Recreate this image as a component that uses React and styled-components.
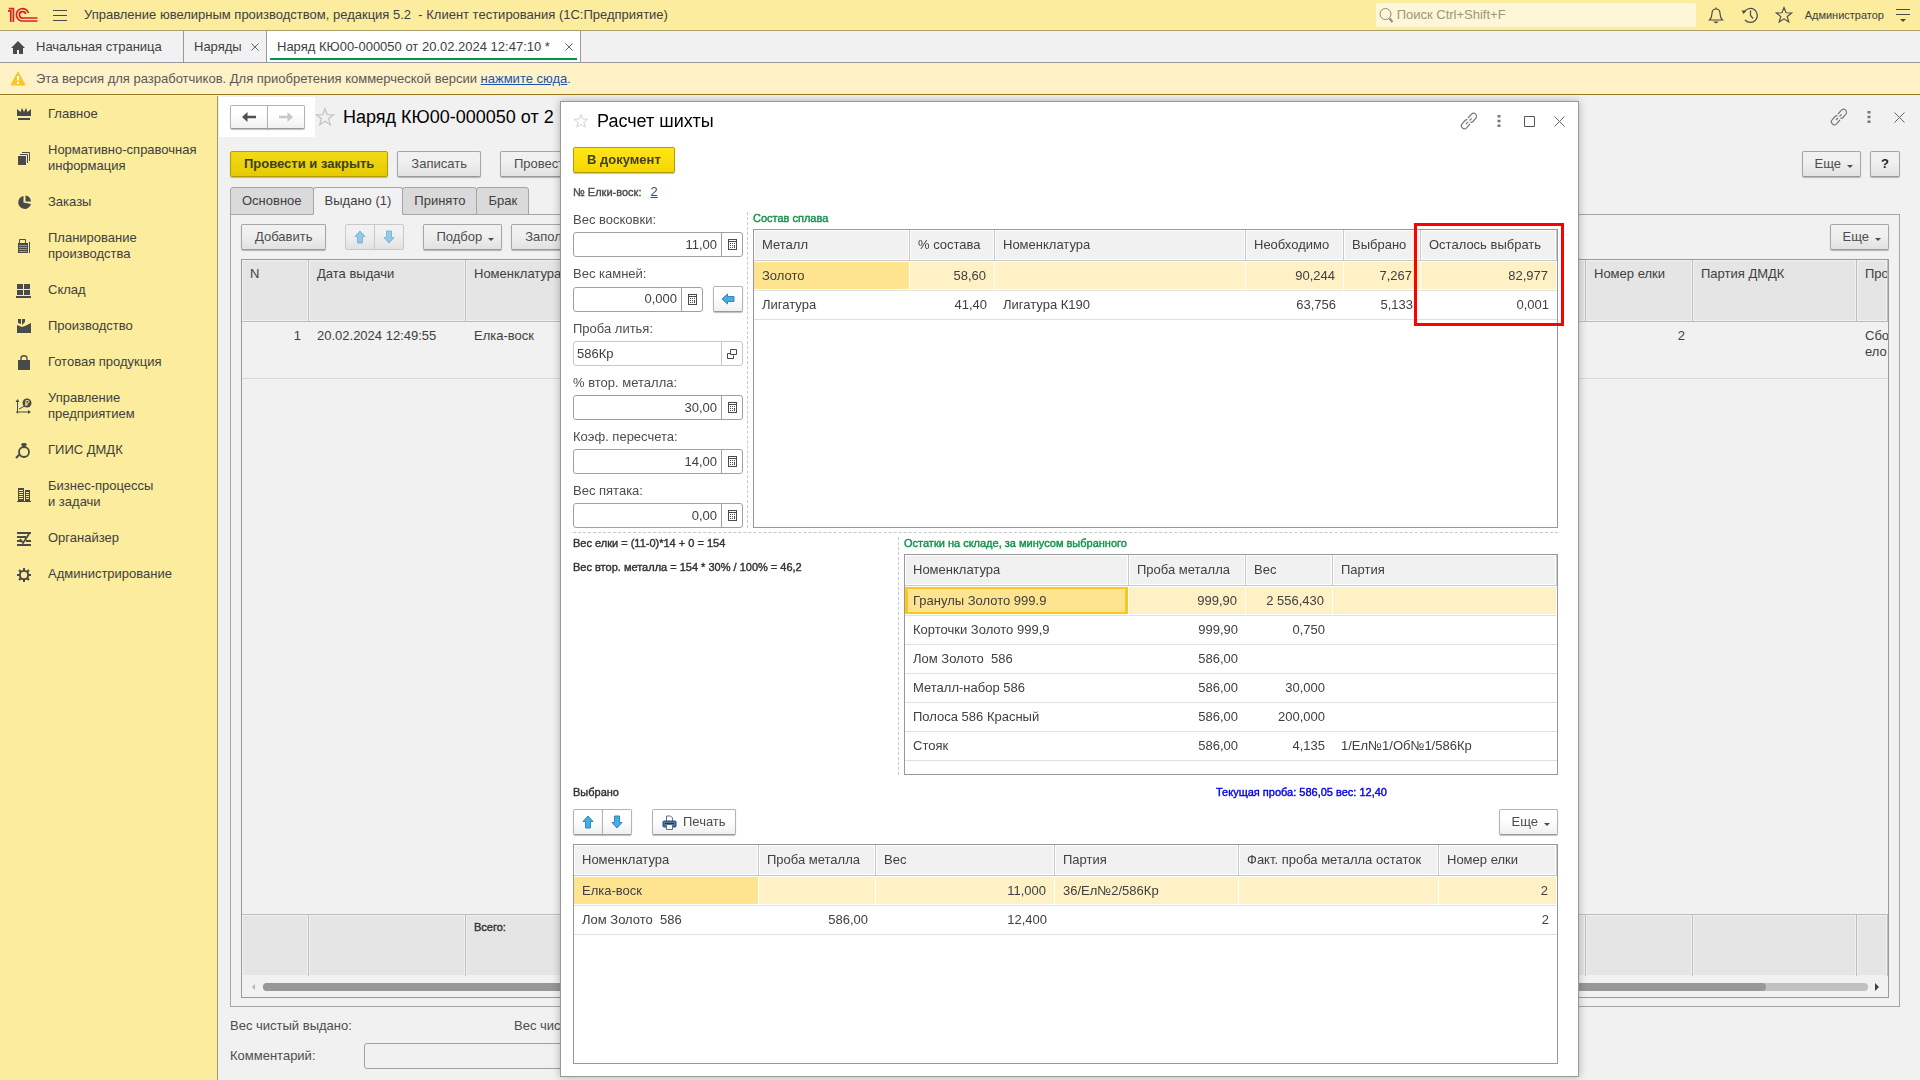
import React from "react";
import styled, { createGlobalStyle, css } from "styled-components";

const Global = createGlobalStyle`
  *, *::before, *::after { box-sizing: border-box; }
  body { margin: 0; background: #f1f1f1; overflow: hidden; }
  body, button, input, table { font: 13px/16px "Liberation Sans", Arial, sans-serif; color: #404040; }
  button { cursor: pointer; }
`;

/* ---------- shell ---------- */

const Page = styled.div`
  height: 100vh;
  display: flex;
  flex-direction: column;
`;

const TitleBar = styled.header`
  height: 31px;
  flex: none;
  display: flex;
  align-items: center;
  padding: 0 9px 0 8px;
  background: #fbec9e;
  border-bottom: 1px solid #aaa06c;
`;

const AppTitle = styled.h1`
  margin: 0 auto 0 16px;
  font: inherit;
  white-space: pre;
`;

const SearchBox = styled.label`
  display: flex;
  align-items: center;
  gap: 3px;
  width: 320px;
  height: 24px;
  padding: 0 3px;
  margin-right: 12px;
  border-radius: 2px;
  background: #fdf6d7;
  input {
    flex: 1;
    min-width: 0;
    padding: 0;
    border: 0;
    outline: 0;
    background: none;
  }
  input::placeholder { color: #9b9681; opacity: 1; }
`;

const PlainButton = styled.button`
  display: inline-flex;
  align-items: center;
  justify-content: center;
  width: ${(p) => p.$w || 16}px;
  height: ${(p) => p.$h || 24}px;
  padding: 0;
  border: 0;
  background: none;
  svg { flex: none; }
`;

const TopActions = styled.div`
  display: flex;
  align-items: center;
  gap: 7px;
`;

const UserName = styled.span`
  margin: 0 4px 0 6px;
  font-size: 11px;
`;

const TabStrip = styled.nav`
  display: flex;
  flex: none;
  height: 32px;
  border-bottom: 1px solid #999;
  background: #f1f1f1;
`;

const WindowTab = styled.div`
  position: relative;
  display: flex;
  align-items: center;
  justify-content: space-between;
  width: ${(p) => p.$w}px;
  padding: 0 6px 0 10px;
  border-right: 1px solid #999;
  white-space: nowrap;
  a { color: inherit; text-decoration: none; }
  ${(p) => p.$home && css`justify-content: flex-start; gap: 10px;`}
  ${(p) => p.$active && css`
    background: #fff;
    &::after {
      content: "";
      position: absolute;
      left: 3px;
      right: 3px;
      bottom: 2px;
      height: 2px;
      background: #009646;
    }
  `}
`;

const Notice = styled.div`
  display: flex;
  flex: none;
  align-items: center;
  gap: 10px;
  height: 32px;
  padding-left: 10px;
  color: #595959;
  background: #fef2c6;
  border-bottom: 1px solid #957a1c;
  a { color: #1a53b0; }
`;

const Body = styled.div`
  display: flex;
  flex: 1;
  min-height: 0;
  padding-top: 1px;
`;

const Sidebar = styled.nav`
  flex: none;
  width: 218px;
  background: #fbec9e;
  border-right: 1px solid #a0976b;
`;

const SideLink = styled.a`
  display: flex;
  align-items: center;
  gap: 14px;
  padding: 10px 0 10px 14px;
  color: #404040;
  text-decoration: none;
  white-space: pre;
  svg { flex: none; margin: -2px 0; }
`;

/* ---------- common controls ---------- */

const Button = styled.button`
  display: inline-flex;
  align-items: center;
  justify-content: center;
  gap: ${(p) => p.$gap || 4}px;
  height: 26px;
  padding: 0 ${(p) => p.$pad || 13}px;
  color: #4d4d4d;
  white-space: nowrap;
  border: 1px solid ${(p) => (p.$dim ? "#a6a6a6" : "#b3b3b3")};
  border-bottom-color: #999;
  border-radius: 2px;
  background: linear-gradient(${(p) => (p.$dim ? "#f1f1f1, #f0f0f0 40%, #e2e2e2" : "#fff, #fff 40%, #f0f0f0")});
  box-shadow: 0 1px 1px rgba(0, 0, 0, 0.25);
  ${(p) => p.$primary && css`
    font-weight: bold;
    color: #404022;
    border-color: #b39e00;
    background: ${p.$dim ? "linear-gradient(#f1da18, #e5cb00)" : "linear-gradient(#ffe61a, #f5d600)"};
  `}
`;

const MenuButton = styled(Button)`
  gap: 6px;
  padding: 0 7px 0 12px;
`;

const Caret = styled.span`
  margin-top: 4px;
  border: 3px solid transparent;
  border-top-color: #4d4d4d;
  border-bottom: 0;
`;

const Segmented = styled.div`
  display: flex;
  ${Button} {
    width: ${(p) => p.$w || 30}px;
    padding: 0;
    height: ${(p) => p.$h || 26}px;
  }
  ${Button}:first-child { border-radius: 2px 0 0 2px; }
  ${Button}:last-child { margin-left: -1px; border-radius: 0 2px 2px 0; }
  ${(p) => p.$faded && css`
    ${Button} { border-color: #c9c9c9; box-shadow: none; }
    svg { opacity: 0.55; }
  `}
`;

const Toolbar = styled.div`
  display: flex;
  align-items: center;
  flex: none;
  gap: ${(p) => p.$gap || 9}px;
  margin-top: ${(p) => p.$top || 0}px;
`;

const Push = styled.div`
  margin-left: auto;
`;

const Spaced = styled.div`
  display: flex;
  margin: 0 10px;
`;

/* ---------- document form ---------- */

const Main = styled.main`
  display: flex;
  flex: 1;
  flex-direction: column;
  min-width: 0;
`;

const FormHeader = styled.div`
  display: flex;
  align-items: center;
  flex: none;
  height: 42px;
  padding-right: 6px;
`;

const NavBox = styled.div`
  margin: 0 0 0 1px;
  padding: 8px 10px 8px 11px;
  background: #fff;
`;

const FormTitle = styled.h2`
  margin: 0 auto 0 8px;
  font: 18px/22px "Liberation Sans", Arial, sans-serif;
  color: #000;
  white-space: nowrap;
`;

const FormBody = styled.div`
  display: flex;
  flex: 1;
  flex-direction: column;
  min-height: 0;
  padding: 13px 20px 11px 12px;
`;

const PageTabs = styled.div`
  display: flex;
  flex: none;
  margin-top: 10px;
`;

const PageTab = styled.button`
  height: 28px;
  margin: 0 -1px -1px 0;
  padding: 0 11px;
  border: 1px solid #a6a6a6;
  border-radius: 3px 3px 0 0;
  background: #dadada;
  ${(p) => p.$active && css`
    position: relative;
    border-bottom-color: #f1f1f1;
    background: #f1f1f1;
  `}
`;

const Panel = styled.section`
  display: flex;
  flex: 1;
  flex-direction: column;
  min-height: 0;
  padding: 9px 10px 8px;
  border: 1px solid #a6a6a6;
`;

const DocGrid = styled.div`
  display: flex;
  flex: 1;
  flex-direction: column;
  min-height: 0;
  margin-top: 9px;
  border: 1px solid #999;
  overflow: hidden;
`;

const DocTable = styled.table`
  width: 100%;
  table-layout: fixed;
  border-collapse: separate;
  border-spacing: 0;
  th, td {
    padding: 6px 8px;
    text-align: left;
    vertical-align: top;
    font-weight: normal;
    overflow: hidden;
    white-space: pre;
  }
  th {
    height: 62px;
    background: #e5e5e5;
    border-right: 1px solid #bdbdbd;
    border-bottom: 1px solid #bdbdbd;
    box-shadow: inset 0 0 0 1px #f1f1f1;
  }
  td { height: 57px; border-bottom: 1px solid #d9d9d9; }
  td.num { text-align: right; }
`;

const FootTable = styled(DocTable)`
  margin-top: auto;
  td {
    height: 62px;
    background: #e5e5e5;
    border: 0 solid #bdbdbd;
    border-width: 1px 1px 0 0;
    box-shadow: inset 0 0 0 1px #f1f1f1;
  }
`;

const ScrollBar = styled.div`
  display: flex;
  align-items: center;
  flex: none;
  gap: 7px;
  height: 21px;
  padding: 0 8px 0 9px;
`;

const ScrollTrack = styled.div`
  flex: 1;
  height: 8px;
  padding-right: 102px;
  border-radius: 4px;
  background: #c1c1c1;
  &::before {
    content: "";
    display: block;
    height: 8px;
    border-radius: 4px;
    background: #979797;
  }
`;

const Totals = styled.div`
  display: grid;
  grid-template-columns: 284px 1fr;
  flex: none;
  margin: 11px 0 9px;
  color: #4d4d4d;
`;

const CommentRow = styled.label`
  display: grid;
  grid-template-columns: 134px minmax(0, 600px);
  align-items: center;
  flex: none;
  color: #4d4d4d;
  input {
    height: 26px;
    border: 1px solid #a0a0a0;
    border-radius: 3px;
    background: #f1f1f1;
  }
`;

/* ---------- dialog ---------- */

const Dialog = styled.section`
  position: fixed;
  inset: 101px 341px 3px 560px;
  display: flex;
  flex-direction: column;
  padding: 0 20px 12px 12px;
  border: 1px solid #999;
  background: #fff;
  box-shadow: 0 0 8px rgba(0, 0, 0, 0.28);
`;

const DialogHeader = styled.div`
  display: flex;
  align-items: center;
  flex: none;
  height: 38px;
  margin-right: -16px;
`;

const TreeRow = styled.div`
  display: flex;
  align-items: center;
  flex: none;
  gap: 9px;
  height: 37px;
  margin-bottom: 2px;
  a { color: #1a4fae; }
`;

const Small = styled.div`
  font-size: 11px;
  line-height: 12px;
  white-space: nowrap;
  -webkit-text-stroke: 0.4px currentColor;
  color: ${(p) => p.$color || "#333"};
`;

const Split = styled.div`
  display: grid;
  flex: none;
  grid-template-columns: ${(p) => p.$left}px minmax(0, 1fr);
  column-gap: 10px;
`;

const SplitLeft = styled.div`
  position: relative;
  display: flex;
  flex-direction: column;
  gap: ${(p) => p.$gap}px;
  &::after {
    content: "";
    position: absolute;
    top: 0;
    bottom: 0;
    right: -5px;
    border-right: 1px dashed #c8c8c8;
  }
`;

const SplitRight = styled.div`
  display: flex;
  flex-direction: column;
  gap: 5px;
`;

const Divider = styled.hr`
  flex: none;
  width: 100%;
  margin: 4px 0 4px;
  border: 0;
  border-top: 1px dashed #c8c8c8;
`;

const FieldBlock = styled.div`
  display: flex;
  flex-direction: column;
  gap: 4px;
  color: #4d4d4d;
`;

const FieldLine = styled.div`
  display: flex;
  align-items: center;
  gap: 10px;
`;

const FieldBox = styled.div`
  display: flex;
  flex: 1;
  min-width: 0;
  height: 25px;
  border: 1px solid ${(p) => (p.$soft ? "#c8c8c8" : "#a0a0a0")};
  border-radius: 3px;
  input {
    flex: 1;
    min-width: 0;
    padding: 0 4px 0 3px;
    border: 0;
    outline: 0;
    background: none;
    text-align: ${(p) => (p.$soft ? "left" : "right")};
  }
  button {
    width: 21px;
    height: 23px;
    border-left: 1px solid ${(p) => (p.$soft ? "#c8c8c8" : "#a0a0a0")};
  }
`;

const GridFrame = styled.div`
  position: relative;
  flex: 1;
  min-height: ${(p) => p.$min || 0}px;
  margin-top: ${(p) => p.$top || 0}px;
  border: 1px solid #999;
`;

const Grid = styled.table`
  width: 100%;
  table-layout: fixed;
  border-collapse: separate;
  border-spacing: 0;
  th, td {
    padding: 0 8px;
    text-align: left;
    font-weight: normal;
    white-space: pre;
  }
  th {
    height: 31px;
    background: #f1f1f1;
    border-right: 1px solid #c8c8c8;
    border-bottom: 1px solid #c8c8c8;
    box-shadow: inset 0 0 0 1px #fff;
  }
  td { height: 29px; border-bottom: 1px solid #e0e0e0; }
  tbody tr:first-child td {
    height: 30px;
    background: #fef1c5;
    border-right: 1px solid #fff;
    box-shadow: inset 0 1px #fff, inset 0 -1px #fff;
  }
  tbody tr:first-child td:first-child {
    background: #fee48f;
    ${(p) => p.$focus && css`box-shadow: inset 0 1px #fff, inset 0 -1px #fff, inset 0 0 0 3px #fac71e;`}
  }
  td.num { text-align: right; }
`;

const Highlight = styled.div`
  position: absolute;
  top: -7px;
  right: -7px;
  width: 150px;
  height: 103px;
  border: 3px solid #fe0000;
  pointer-events: none;
`;

const ChosenRow = styled.div`
  display: grid;
  grid-template-columns: 643px 1fr;
  align-items: center;
  flex: none;
  height: 34px;
`;

/* ---------- icons ---------- */

const INK = "#4a4a4a";

const Svg = ({ w = 20, h = w, children, ...rest }) => (
  <svg width={w} height={h} viewBox={`0 0 ${w} ${h}`} fill="none" aria-hidden="true" {...rest}>
    {children}
  </svg>
);

const Logo = () => (
  <Svg w={30} h={16}>
    <g stroke="#dd1f26" strokeWidth="1.700">
      <path d="M0 3.800h2.800V15M.8 1.700h4.600V15" />
      <path d="M20.500 6A6.200 6.200 0 1 0 15 14h14.500" />
      <path d="M17.700 7A3.200 3.200 0 1 0 15 11h14.500" />
    </g>
  </Svg>
);

const Menu = () => (
  <Svg w={14} h={12}><path d="M0 1.500h14M0 6.500h14M0 11.500h14" stroke={INK} /></Svg>
);

const Magnifier = () => (
  <Svg w={15} h={16} stroke="#8f8b78">
    <circle cx="6.500" cy="7" r="5.500" />
    <path d="M10.500 11.500L13.500 15" strokeWidth="2" />
  </Svg>
);

const Bell = () => (
  <Svg w={16} h={18} stroke={INK} strokeWidth="1.200">
    <path d="M8 1.500v1M1.500 14c2.500-2 2.300-4.500 2.500-7C4.200 4.500 6 3 8 3s3.800 1.500 4 4c.2 2.500 0 5 2.500 7z" />
    <path d="M5 15.500h6L8 17.500z" fill={INK} stroke="none" />
  </Svg>
);

const HistoryIcon = () => (
  <Svg w={18} h={18} stroke={INK} strokeWidth="1.200">
    <path d="M3 6.500A7 7 0 1 1 4 14" />
    <path d="M9.500 4.500v5l2.500 3" />
    <path d="M.5 4.500h5L2.500 8z" fill={INK} stroke="none" />
  </Svg>
);

const Star = ({ size = 18, color = INK }) => (
  <svg width={size} height={size} viewBox="0 0 18 18" fill="none" stroke={color} strokeWidth="1.100" aria-hidden="true">
    <path d="M9 1.500l2 5.300 5.700.2-4.500 3.500 1.600 5.500L9 12.800 4.200 16l1.600-5.500L1.300 7l5.700-.2z" />
  </svg>
);

const UserMenu = () => (
  <Svg w={14} h={14}><path d="M0 1.500h14M0 6.500h14" stroke={INK} /><path d="M4 11h6l-3 3z" fill={INK} /></Svg>
);

const Home = () => (
  <Svg w={16} h={14}><path d="M8 1L1 8h2v6h4V10h2v4h4V8h2z" fill={INK} /></Svg>
);

const Cross = ({ size = 8 }) => (
  <Svg w={size}><path d={`M.5 .5L${size - 0.5} ${size - 0.5}M${size - 0.5} .5L.5 ${size - 0.5}`} stroke="#666" /></Svg>
);

const Warning = () => (
  <Svg w={16} h={15}>
    <path d="M8 1l7 13H1z" fill="#f9c71d" stroke="#f9c71d" strokeLinejoin="round" />
    <path d="M8 5v4.500M8 11v2" stroke="#fff" strokeWidth="2" />
  </Svg>
);

const LinkIcon = () => (
  <Svg w={18} stroke="#777" strokeWidth="1.200">
    <path d="M6 12l6-6" strokeDasharray="3 2" />
    <path d="M8 6l3.500-3.800a2.900 2.900 0 0 1 4.200 4.100L13 9.500a3 3 0 0 1-2.500.8" />
    <path d="M10 12l-3.500 3.800a2.900 2.900 0 0 1-4.200-4.100L5 8.500a3 3 0 0 1 2.500-.8" />
  </Svg>
);

const Dots = () => (
  <Svg w={4} h={12}><path d="M.5 0h3v2.500h-3zM.5 4.700h3v2.500h-3zM.5 9.400h3v2.500h-3z" fill="#777" /></Svg>
);

const Square = () => (
  <Svg w={11}><path d="M.5.5h10v10H.5z" stroke="#555" /></Svg>
);

const NavArrow = ({ right }) => (
  <Svg w={14} h={12}>
    <path
      d={right ? "M0 4.700h8.500V1l5.500 5-5.500 5V7.300H0z" : "M14 4.700H5.500V1L0 6l5.500 5V7.300H14z"}
      fill={right ? "#c8c8c8" : "#505050"}
    />
  </Svg>
);

const BlueArrow = ({ turn = 0 }) => (
  <Svg w={14}>
    <path transform={`rotate(${turn} 7 7)`} d="M7 1l5 5.500H9.500V13h-5V6.500H2z" fill="#41aeea" stroke="#3786b8" strokeLinejoin="round" />
  </Svg>
);

const Calculator = () => (
  <Svg w={9} h={11} shapeRendering="crispEdges">
    <path d="M.5.5h8v10h-8zM0 2.500h9" stroke={INK} />
    <path d="M2 4h1v1H2zM4 4h1v1H4zM6 4h1v1H6zM2 6h1v1H2zM4 6h1v1H4zM2 8h1v1H2zM4 8h1v1H4zM6 6h1v3H6z" fill={INK} />
  </Svg>
);

const OpenIcon = () => (
  <Svg w={10}><path d="M3.500.5h6v5h-6zM3.500 4.500h-3v5h6v-3" stroke={INK} /></Svg>
);

const Printer = () => (
  <Svg w={15}>
    <path d="M4.500 6V1h4l2 2v3" fill="#fff" stroke="#5b6f85" />
    <rect x="1" y="6" width="13" height="6" rx="1" fill="#4c76a3" stroke="#2b4869" />
    <path d="M3 8.500h9" stroke="#1f3855" />
    <path d="M4.500 9.500h6v5h-6z" fill="#fff" stroke="#5b6f85" />
  </Svg>
);

const ScrollArrow = ({ right }) => (
  <Svg w={5} h={8}><path d={right ? "M0 0v8l4-4z" : "M4 1v6L1 4z"} fill={right ? "#404040" : "#b5b5b5"} /></Svg>
);

const side = {
  crown: <path d="M3 5l3.500 3L8 4l2 4 2-4 1.500 4L17 5v7H3zM4 14h12v2H4z" fill={INK} />,
  docs: <><path d="M4 8h8v9H4z" fill={INK} /><path d="M6 6.500h7.500V15M8 4.500h7.500V13" stroke={INK} /></>,
  pie: <><path d="M9.500 4a6.500 6.500 0 1 0 7.500 8L9.500 10.500z" fill={INK} /><path d="M11.500 3.500a6 6 0 0 1 5.500 6h-5.500z" fill={INK} /></>,
  till: <><path d="M5.500 8V3.500h6V8M15.500 6v11" stroke={INK} /><path d="M4 7h10v10H4z" fill={INK} /><path d="M5.500 9.500h7M5.500 11.500h7M5.500 13.500h7M5.500 15.500h7" stroke="#fbec9e" strokeDasharray="1 1" /></>,
  store: <path d="M3 4h6v5H3zM10 4h6v5h-6zM3 10h6v5H3zM10 10h6v5h-6zM2 16h15v2H2z" fill={INK} />,
  plant: <path d="M3 17V9l5 2 3-1 6-3v10zM4 3h3v5l-3-1zM8 3h3v3L8 9z" fill={INK} />,
  bag: <><path d="M4 8h12v10H4z" fill={INK} /><path d="M7 9V6c0-3 6-3 6 0v3" stroke={INK} strokeWidth="1.300" /></>,
  axes: <><path d="M3.500 4v13.500M2 16h14" stroke={INK} /><path d="M1.500 6l2-3 2 3zM14 14l3 2-3 2z" fill={INK} /><path d="M5 13l4-2 2-2" stroke={INK} /><circle cx="13" cy="7" r="4.500" fill={INK} /><path d="M12 10V4.500h2c1.500 0 1.500 2.500 0 2.500h-3M11 8.700h3" stroke="#fbec9e" strokeWidth=".9" /></>,
  ring: <><circle cx="10" cy="12" r="5" stroke={INK} strokeWidth="1.800" /><path d="M7 4.500l1.500-1.500h3L13 4.500l-3 4z" fill={INK} /><path d="M6 14l-4 4" stroke={INK} strokeWidth="2" /></>,
  building: <><path d="M4 4h6v13H4zM11 6h5v11h-5z" fill={INK} /><path d="M5 6.500h4M5 8.500h4M5 10.500h4M5 12.500h4M5 14.500h4M12 8.500h3M12 10.500h3M12 12.500h3M12 14.500h3" stroke="#fbec9e" /><path d="M3 17.500h14" stroke={INK} /></>,
  organizer: <><path d="M3 5h14M3 9h9M3 13h4M12 13h5M3 17h14" stroke={INK} strokeWidth="2" /><path d="M6 11l3 4 6-9" stroke={INK} strokeWidth="1.800" /></>,
  gear: <><circle cx="10" cy="11" r="4.200" stroke={INK} strokeWidth="2" /><path d="M10 4v2.500M10 15.500V18M3 11h2.500M14.500 11H17M5 6l2 2M13 14l2 2M5 16l2-2M13 8l2-2" stroke={INK} strokeWidth="2" /></>,
};

const sections = [
  ["crown", "Главное"],
  ["docs", "Нормативно-справочная\nинформация"],
  ["pie", "Заказы"],
  ["till", "Планирование\nпроизводства"],
  ["store", "Склад"],
  ["plant", "Производство"],
  ["bag", "Готовая продукция"],
  ["axes", "Управление\nпредприятием"],
  ["ring", "ГИИС ДМДК"],
  ["building", "Бизнес-процессы\nи задачи"],
  ["organizer", "Органайзер"],
  ["gear", "Администрирование"],
];

/* ---------- pieces ---------- */

const More = ({ dim }) => (
  <MenuButton $dim={dim}>Еще<Caret /></MenuButton>
);

const Cols = ({ widths }) => (
  <colgroup>{widths.map((w, i) => <col key={i} width={w} />)}</colgroup>
);

const DataGrid = ({ label, widths, head, numeric, rows, focus }) => (
  <Grid aria-label={label} $focus={focus}>
    <Cols widths={widths} />
    <thead><tr>{head.map((h) => <th key={h} scope="col">{h}</th>)}</tr></thead>
    <tbody>
      {rows.map((row, r) => (
        <tr key={r}>{row.map((c, i) => <td key={i} className={numeric.includes(i) ? "num" : undefined}>{c}</td>)}</tr>
      ))}
    </tbody>
  </Grid>
);

const Field = ({ id, label, value, soft, extra }) => (
  <FieldBlock>
    <label htmlFor={id}>{label}</label>
    <FieldLine>
      <FieldBox $soft={soft}>
        <input id={id} defaultValue={value} />
        <PlainButton aria-label={soft ? "Открыть" : "Калькулятор"}>{soft ? <OpenIcon /> : <Calculator />}</PlainButton>
      </FieldBox>
      {extra}
    </FieldLine>
  </FieldBlock>
);

const SquareButton = styled(Button)`
  width: 30px;
  padding: 0;
  font-weight: ${(p) => (p.$strong ? "bold" : "normal")};
  color: #222;
`;

const docWidths = [67, 157, undefined, 107, 107, 164, 31];

const DocumentForm = () => (
  <Main>
    <FormHeader>
      <NavBox>
        <Segmented $w={38} $h={24}>
          <Button aria-label="Назад"><NavArrow /></Button>
          <Button aria-label="Вперед"><NavArrow right /></Button>
        </Segmented>
      </NavBox>
      <PlainButton $w={20} aria-label="В избранное"><Star size={20} color="#c4c4c4" /></PlainButton>
      <FormTitle>Наряд КЮ00-000050 от 2</FormTitle>
      <PlainButton $w={30} aria-label="Получить ссылку"><LinkIcon /></PlainButton>
      <PlainButton $w={30} aria-label="Действия"><Dots /></PlainButton>
      <PlainButton $w={30} aria-label="Закрыть"><Cross size={11} /></PlainButton>
    </FormHeader>
    <FormBody>
      <Toolbar>
        <Button $dim $primary>Провести и закрыть</Button>
        <Button $dim>Записать</Button>
        <Spaced><Button $dim>Провести</Button></Spaced>
        <Push><More dim /></Push>
        <SquareButton $dim $strong aria-label="Справка">?</SquareButton>
      </Toolbar>
      <PageTabs role="tablist">
        <PageTab role="tab">Основное</PageTab>
        <PageTab role="tab" aria-selected="true" $active>Выдано (1)</PageTab>
        <PageTab role="tab">Принято</PageTab>
        <PageTab role="tab">Брак</PageTab>
      </PageTabs>
      <Panel>
        <Toolbar>
          <Button $dim>Добавить</Button>
          <Spaced>
            <Segmented $faded>
              <Button $dim aria-label="Вверх"><BlueArrow /></Button>
              <Button $dim aria-label="Вниз"><BlueArrow turn={180} /></Button>
            </Segmented>
          </Spaced>
          <MenuButton $dim>Подбор<Caret /></MenuButton>
          <Button $dim>Заполнить</Button>
          <Push><More dim /></Push>
        </Toolbar>
        <DocGrid>
          <DocTable aria-label="Выдано">
            <Cols widths={docWidths} />
            <thead>
              <tr>
                <th>N</th><th>Дата выдачи</th><th>Номенклатура</th><th /><th>Номер елки</th><th>Партия ДМДК</th><th>Про</th>
              </tr>
            </thead>
            <tbody>
              <tr>
                <td className="num">1</td><td>20.02.2024 12:49:55</td><td>Елка-воск</td><td /><td className="num">2</td><td /><td>{"Сбо\nело"}</td>
              </tr>
            </tbody>
          </DocTable>
          <FootTable aria-label="Итоги">
            <Cols widths={docWidths} />
            <tbody><tr><td /><td /><td><Small>Всего:</Small></td><td /><td /><td /><td /></tr></tbody>
          </FootTable>
          <ScrollBar><ScrollArrow /><ScrollTrack /><ScrollArrow right /></ScrollBar>
        </DocGrid>
      </Panel>
      <Totals><span>Вес чистый выдано:</span><span>Вес чистый принято:</span></Totals>
      <CommentRow>Комментарий:<input /></CommentRow>
    </FormBody>
  </Main>
);

const ChargeDialog = () => (
  <Dialog role="dialog" aria-label="Расчет шихты">
    <DialogHeader>
      <PlainButton aria-label="В избранное"><Star size={16} color="#d2d2d2" /></PlainButton>
      <FormTitle>Расчет шихты</FormTitle>
      <PlainButton $w={30} aria-label="Получить ссылку"><LinkIcon /></PlainButton>
      <PlainButton $w={30} aria-label="Действия"><Dots /></PlainButton>
      <PlainButton $w={30} aria-label="Развернуть"><Square /></PlainButton>
      <PlainButton $w={30} aria-label="Закрыть"><Cross size={11} /></PlainButton>
    </DialogHeader>
    <Toolbar $top={7}><Button $primary>В документ</Button></Toolbar>
    <TreeRow><Small $color="#4d4d4d">№ Елки-воск:</Small><a href="#tree">2</a></TreeRow>
    <Split $left={170}>
      <SplitLeft $gap={9}>
        <Field id="wax" label="Вес восковки:" value="11,00" />
        <Field
          id="stones"
          label="Вес камней:"
          value="0,000"
          extra={<SquareButton aria-label="Перенести"><BlueArrow turn={-90} /></SquareButton>}
        />
        <Field id="assay" label="Проба литья:" value="586Кр" soft />
        <Field id="secondary" label="% втор. металла:" value="30,00" />
        <Field id="factor" label="Коэф. пересчета:" value="14,00" />
        <Field id="button-weight" label="Вес пятака:" value="0,00" />
      </SplitLeft>
      <SplitRight>
        <Small $color="#12924a">Состав сплава</Small>
        <GridFrame>
          <DataGrid
            label="Состав сплава"
            widths={[156, 85, undefined, 98, 77, 136]}
            head={["Металл", "% состава", "Номенклатура", "Необходимо", "Выбрано", "Осталось выбрать"]}
            numeric={[1, 3, 4, 5]}
            rows={[
              ["Золото", "58,60", "", "90,244", "7,267", "82,977"],
              ["Лигатура", "41,40", "Лигатура К190", "63,756", "5,133", "0,001"],
            ]}
          />
          <Highlight />
        </GridFrame>
      </SplitRight>
    </Split>
    <Divider />
    <Split $left={321}>
      <SplitLeft $gap={12}>
        <Small>Вес елки = (11-0)*14 + 0 = 154</Small>
        <Small>Вес втор. металла = 154 * 30% / 100% = 46,2</Small>
      </SplitLeft>
      <SplitRight>
        <Small $color="#12924a">Остатки на складе, за минусом выбранного</Small>
        <GridFrame $min={221}>
          <DataGrid
            label="Остатки на складе"
            focus
            widths={[224, 117, 87, undefined]}
            head={["Номенклатура", "Проба металла", "Вес", "Партия"]}
            numeric={[1, 2]}
            rows={[
              ["Гранулы Золото 999.9", "999,90", "2 556,430", ""],
              ["Корточки Золото 999,9", "999,90", "0,750", ""],
              ["Лом Золото  586", "586,00", "", ""],
              ["Металл-набор 586", "586,00", "30,000", ""],
              ["Полоса 586 Красный", "586,00", "200,000", ""],
              ["Стояк", "586,00", "4,135", "1/Ел№1/Об№1/586Кр"],
            ]}
          />
        </GridFrame>
      </SplitRight>
    </Split>
    <ChosenRow><Small>Выбрано</Small><Small $color="#0000f0">Текущая проба: 586,05 вес: 12,40</Small></ChosenRow>
    <Toolbar $gap={20}>
      <Segmented>
        <Button aria-label="Вверх"><BlueArrow /></Button>
        <Button aria-label="Вниз"><BlueArrow turn={180} /></Button>
      </Segmented>
      <Button $pad={9} $gap={6}><Printer />Печать</Button>
      <Push><More /></Push>
    </Toolbar>
    <GridFrame $top={9}>
      <DataGrid
        label="Выбрано"
        widths={[185, 117, 179, 184, 200, undefined]}
        head={["Номенклатура", "Проба металла", "Вес", "Партия", "Факт. проба металла остаток", "Номер елки"]}
        numeric={[1, 2, 4, 5]}
        rows={[
          ["Елка-воск", "", "11,000", "36/Ел№2/586Кр", "", "2"],
          ["Лом Золото  586", "586,00", "12,400", "", "", "2"],
        ]}
      />
    </GridFrame>
  </Dialog>
);

export default function App() {
  return (
    <Page>
      <Global />
      <TitleBar>
        <Logo />
        <Toolbar $gap={14}><span /><PlainButton aria-label="Меню"><Menu /></PlainButton></Toolbar>
        <AppTitle>{"Управление ювелирным производством, редакция 5.2  - Клиент тестирования (1С:Предприятие)"}</AppTitle>
        <SearchBox><Magnifier /><input aria-label="Поиск" placeholder="Поиск Ctrl+Shift+F" /></SearchBox>
        <TopActions>
          <PlainButton aria-label="Уведомления"><Bell /></PlainButton>
          <Spaced><PlainButton $w={18} aria-label="История"><HistoryIcon /></PlainButton></Spaced>
          <PlainButton aria-label="Избранное"><Star /></PlainButton>
          <UserName>Администратор</UserName>
          <PlainButton aria-label="Настройки"><UserMenu /></PlainButton>
        </TopActions>
      </TitleBar>
      <TabStrip>
        <WindowTab $home $w={184}><Home /><a href="#home">Начальная страница</a></WindowTab>
        <WindowTab $w={83}><a href="#orders">Наряды</a><PlainButton $w={10} aria-label="Закрыть"><Cross /></PlainButton></WindowTab>
        <WindowTab $active $w={314}><a href="#order">Наряд КЮ00-000050 от 20.02.2024 12:47:10 *</a><PlainButton $w={10} aria-label="Закрыть"><Cross /></PlainButton></WindowTab>
      </TabStrip>
      <Notice>
        <Warning />
        <span>Эта версия для разработчиков. Для приобретения коммерческой версии <a href="#buy">нажмите сюда</a>.</span>
      </Notice>
      <Body>
        <Sidebar>
          {sections.map(([icon, text]) => (
            <SideLink key={icon} href={`#${icon}`}><Svg w={20}>{side[icon]}</Svg>{text}</SideLink>
          ))}
        </Sidebar>
        <DocumentForm />
      </Body>
      <ChargeDialog />
    </Page>
  );
}
